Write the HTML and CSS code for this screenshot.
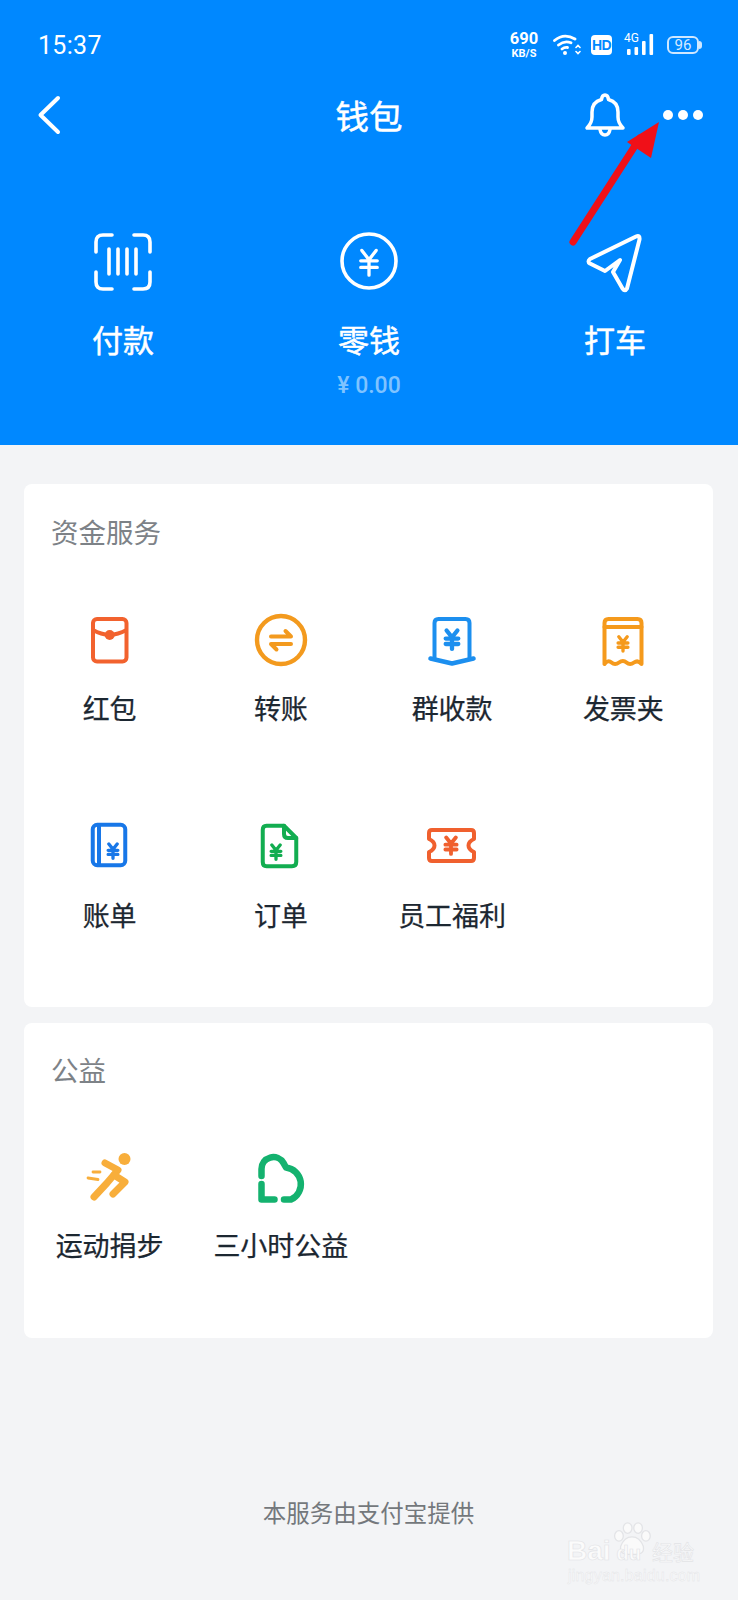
FILE: index.html
```html
<!DOCTYPE html>
<html>
<head>
	<meta charset="UTF-8">
	<title>钱包</title>
	<link rel="stylesheet" href="styles.css">
</head>
<body>

<!-- yen marks shared by the icons -->
<svg class="defs">
	<symbol id="yen" viewBox="0 0 20 26">
		<path d="M3.500 2 10 10.500 16.500 2M2.500 11.500H17.500M2.500 17.500H17.500M10 10.500V24.500" fill="none" stroke="currentColor" stroke-width="3" stroke-linecap="round" stroke-linejoin="round"/>
	</symbol>
	<symbol id="yenBold" viewBox="0 0 20 26">
		<path d="M4 3 10 10.500 16 3M3 12H17M3 18H17M10 10.500V23.500" fill="none" stroke="currentColor" stroke-width="4.800" stroke-linecap="round" stroke-linejoin="round"/>
	</symbol>
</svg>

<div id="wrapper">

	<div class="top">
		<div class="statusBar">
			<span class="time">15:37</span>
			<div class="statusIcons">
				<div class="speed"><b>690</b><i>KB/S</i></div>
				<svg class="wifi" width="28" height="22" viewBox="0 0 28 22" fill="none" stroke="#fff" stroke-width="2.800" stroke-linecap="round">
					<path d="M1.500 6.500Q11-1.500 22 5M5.500 11Q11.500 6 18 8.800M9 15Q11.500 13 14.500 13.500"/>
					<circle cx="12" cy="19" r="2" fill="#fff" stroke="none"/>
					<path d="M23 13.500 25 11.500 27 13.500M23 17.500 25 19.500 27 17.500" stroke-width="1.600"/>
				</svg>
				<span class="hd">HD</span>
				<div class="signal">
					<span>4G</span>
					<svg width="30" height="22" viewBox="0 0 30 22" fill="#fff">
						<rect x="3" y="15" width="3.600" height="6" rx="1"/>
						<rect x="10.500" y="13" width="3.600" height="8" rx="1"/>
						<rect x="18" y="7" width="3.600" height="14" rx="1"/>
						<rect x="25.500" y="0" width="3.600" height="21" rx="1"/>
					</svg>
				</div>
				<div class="battery"><span>96</span></div>
			</div>
		</div>

		<div class="nav">
			<svg width="24" height="40" viewBox="0 0 24 40" fill="none" stroke="#fff" stroke-width="4" stroke-linecap="round" stroke-linejoin="round">
				<path d="M21 3 3.500 20 21 37"/>
			</svg>
			<h1 class="title">钱包</h1>
			<div class="navRight">
				<svg width="42" height="44" viewBox="0 0 42 44" fill="none" stroke="#fff" stroke-width="3.500" stroke-linecap="round" stroke-linejoin="round">
					<path d="M3 35H39Q34 30 34 24V19Q34 9 24.500 6.500Q24 2 21 2Q18 2 17.500 6.500Q8 9 8 19V24Q8 30 3 35Z"/>
					<path d="M16 36.500Q17 42 21 42Q25 42 26 36.500"/>
				</svg>
				<div class="dots"><span></span><span></span><span></span></div>
			</div>
		</div>

		<div class="actions">
			<div class="action">
				<svg width="64" height="64" viewBox="0 0 64 64" fill="none" stroke="#fff" stroke-width="3.600" stroke-linecap="round" stroke-linejoin="round">
					<path d="M5 22V12Q5 5 12 5H21M43 5H52Q59 5 59 12V22M59 42V52Q59 59 52 59H43M21 59H12Q5 59 5 52V42"/>
					<path d="M18 19V44M27 19V44M36 19V44M45 19V44"/>
				</svg>
				<div class="actionName">付款</div>
			</div>
			<div class="action">
				<svg class="yuan" width="64" height="64" viewBox="0 0 64 64" fill="none">
					<circle cx="32" cy="31" r="27" stroke="#fff" stroke-width="3.600"/>
					<use href="#yen" x="21" y="18" width="22" height="29"/>
				</svg>
				<div class="actionName">零钱</div>
				<div class="actionSub">¥ 0.00</div>
			</div>
			<div class="action">
				<svg width="64" height="64" viewBox="0 0 64 64" fill="none" stroke="#fff" stroke-width="4" stroke-linecap="round" stroke-linejoin="round">
					<path d="M53 6.500 7 29Q4 31.500 7 33.500L22 41 37 30 30 42 39.500 58.500Q42 62 44 58.500L56.500 9.500Q57 4.500 53 6.500Z"/>
				</svg>
				<div class="actionName">打车</div>
			</div>
		</div>
	</div>

	<div class="main">

		<div class="card">
			<div class="cardTitle">资金服务</div>
			<div class="grid">
				<div class="item">
					<svg width="60" height="60" viewBox="0 0 60 60" fill="none" stroke="#f2622e" stroke-width="4" stroke-linejoin="round">
						<rect x="13" y="9" width="33.500" height="42.500" rx="4"/>
						<path d="M13 20Q21 24.500 29.700 25Q38 24.500 46.500 20"/>
						<circle cx="29.700" cy="25" r="5" fill="#f2622e" stroke="none"/>
					</svg>
					<div class="itemName">红包</div>
				</div>
				<div class="item">
					<svg width="60" height="60" viewBox="0 0 60 60" fill="none" stroke="#f39a1e" stroke-width="4.400" stroke-linecap="round" stroke-linejoin="round">
						<circle cx="30" cy="30" r="24"/>
						<path d="M20 26.500H40L34.500 21M40 34H20L25.500 39.500" stroke-width="4"/>
					</svg>
					<div class="itemName">转账</div>
				</div>
				<div class="item">
					<svg class="blue" width="60" height="60" viewBox="0 0 60 60" fill="none" stroke="#1c8fef" stroke-width="4" stroke-linecap="round" stroke-linejoin="round">
						<path d="M12.500 48V13Q12.500 9 16.500 9H43.500Q47.500 9 47.500 13V48"/>
						<path d="M8.500 48.500 30 53.500 51.500 48.500" stroke-width="4.600"/>
						<use href="#yenBold" x="21" y="17" width="18" height="25" stroke="none"/>
					</svg>
					<div class="itemName">群收款</div>
				</div>
				<div class="item">
					<svg class="orange" width="60" height="60" viewBox="0 0 60 60" fill="none" stroke="#f59a1c" stroke-width="4" stroke-linecap="round" stroke-linejoin="round">
						<path d="M11.500 54V13Q11.500 9 15.500 9H44.500Q48.500 9 48.500 13V54Q45 49.500 41 52.500T33.500 52.500 26 52.500 18.500 52.500 11.500 54Z"/>
						<path d="M11.500 17H48.500"/>
						<use href="#yenBold" x="23" y="24.500" width="14" height="18.500" stroke="none"/>
					</svg>
					<div class="itemName">发票夹</div>
				</div>
				<div class="item">
					<svg class="deepBlue" width="60" height="60" viewBox="0 0 60 60" fill="none" stroke="#1877e8" stroke-width="4" stroke-linejoin="round">
						<rect x="12.750" y="7.750" width="32.500" height="40.500" rx="4.500"/>
						<path d="M19 8V48"/>
						<use href="#yenBold" x="26" y="25" width="14" height="18" stroke="none"/>
					</svg>
					<div class="itemName">账单</div>
				</div>
				<div class="item">
					<svg class="green" width="60" height="60" viewBox="0 0 60 60" fill="none" stroke="#12ad50" stroke-width="4" stroke-linecap="round" stroke-linejoin="round">
						<path d="M15.500 8.750H33L45.250 21V45Q45.250 49.250 41 49.250H15.500Q11.750 49.250 11.750 45V12.750Q11.750 8.750 15.500 8.750Z"/>
						<path d="M33 8.750V17Q33 21 37 21H45.250"/>
						<use href="#yenBold" x="18" y="26" width="14" height="18" stroke="none"/>
					</svg>
					<div class="itemName">订单</div>
				</div>
				<div class="item">
					<svg class="red" width="60" height="60" viewBox="0 0 60 60" fill="none" stroke="#f0602e" stroke-width="4" stroke-linejoin="round">
						<path d="M10 13H49Q52 13 52 16V22Q46.500 24.500 46.500 28.500T52 35V41Q52 44 49 44H10Q7 44 7 41V35Q12.500 32.500 12.500 28.500T7 22V16Q7 13 10 13Z"/>
						<use href="#yenBold" x="21" y="18" width="16" height="21" stroke="none"/>
					</svg>
					<div class="itemName">员工福利</div>
				</div>
			</div>
		</div>

		<div class="card second">
			<div class="cardTitle">公益</div>
			<div class="grid">
				<div class="item">
					<svg width="60" height="60" viewBox="0 -1 60 60" fill="none" stroke="#f8ae3b" stroke-width="7" stroke-linecap="round" stroke-linejoin="round">
						<circle cx="44.500" cy="11" r="6" fill="#f8ae3b" stroke="none"/>
						<path d="M25 15 38 22 27 35 14 49"/>
						<path d="M34 27 45 34 33 46"/>
						<path d="M13 24H20M8 30 18 31.500" stroke-width="2.800"/>
					</svg>
					<div class="itemName">运动捐步</div>
				</div>
				<div class="item">
					<svg width="60" height="60" viewBox="0 -1 60 60" fill="none" stroke="#14b26f" stroke-width="6.500" stroke-linecap="round" stroke-linejoin="round">
						<path d="M10.500 28V21A11.800 11.800 0 0 1 32.500 15L35 19.500A16.800 16.800 0 0 1 40 51.500H33"/>
						<path d="M10.500 36V51.500H23.500"/>
					</svg>
					<div class="itemName">三小时公益</div>
				</div>
			</div>
		</div>

		<div class="footer">本服务由支付宝提供</div>
	</div>

	<!-- red arrow drawn on top of the header -->
	<svg class="arrow" width="738" height="260" viewBox="0 0 738 260">
		<path d="M573 242 640 138" fill="none" stroke="#f01018" stroke-width="7" stroke-linecap="round"/>
		<path d="M659 122 627 142 651 158Z" fill="#f01018"/>
	</svg>

	<div class="mark">
		<svg class="paw" width="40" height="44" viewBox="0 0 46 46" fill="#fafafa" stroke="#e3e4e7" stroke-width="1.500">
			<ellipse cx="8" cy="16" rx="5" ry="6"/>
			<ellipse cx="18" cy="7" rx="5" ry="6"/>
			<ellipse cx="30" cy="7" rx="5" ry="6"/>
			<ellipse cx="39" cy="16" rx="5" ry="6"/>
			<path d="M23 17Q32 17 36 28Q38 39 23 37Q8 39 10 28Q14 17 23 17Z"/>
		</svg>
		<div class="markBrand"><span>Bai</span><span class="markDu">du</span><span class="markCn">经验</span></div>
		<div class="markUrl">jingyan.baidu.com</div>
	</div>

</div>
</body>

</html>
```

FILE: styles.css
```css
*{
	box-sizing: border-box;
}

html, body{
	margin: 0;
	padding: 0;
}

body{
	font-family: "Noto Sans CJK SC", "Noto Sans", sans-serif;
	background: #f3f4f6;
}

.defs{
	position: absolute;
	width: 0;
	height: 0;
}

#wrapper{
	position: relative;
	width: 738px;
	height: 1600px;
	overflow: hidden;
}

/* blue header */
.top{
	height: 445px;
	background: #0088ff;
	color: #fff;
}

.statusBar{
	height: 90px;
	padding: 0 37px 0 38px;
	display: flex;
	align-items: center;
	justify-content: space-between;
}
.time{
	font-family: Roboto, sans-serif;
	font-size: 25px;
	letter-spacing: 0.3px;
}
.statusIcons{
	display: flex;
	align-items: center;
}
.speed{
	width: 30px;
	margin-right: 14px;
	display: flex;
	flex-direction: column;
	align-items: center;
	font-family: Roboto, sans-serif;
	line-height: 1;
}
.speed b{
	font-size: 16.500px;
	font-weight: 700;
}
.speed i{
	font-size: 11px;
	font-weight: 700;
	font-style: normal;
}
.wifi{
	margin-right: 10px;
}
.hd{
	width: 21px;
	height: 20px;
	margin-right: 12px;
	border-radius: 4px;
	background: #fff;
	color: #0088ff;
	font-family: "Liberation Sans", sans-serif;
	font-size: 14px;
	font-weight: 700;
	line-height: 20px;
	text-align: center;
	letter-spacing: -0.5px;
}
.signal{
	position: relative;
	width: 30px;
	height: 22px;
	margin-right: 13px;
}
.signal span{
	position: absolute;
	left: 0;
	top: -2px;
	font-family: Roboto, sans-serif;
	font-size: 12px;
	line-height: 12px;
}
.signal svg{
	display: block;
}
.battery{
	position: relative;
	width: 32px;
	height: 18px;
	margin-right: 2px;
	border: 2px solid #cfe7ff;
	border-radius: 6px;
	font-family: Roboto, sans-serif;
	font-size: 15px;
	line-height: 14px;
	text-align: center;
	color: #d6eaff;
}
.battery:after{
	content: "";
	position: absolute;
	right: -5px;
	top: 3px;
	width: 3px;
	height: 8px;
	border-radius: 0 3px 3px 0;
	background: #cfe7ff;
}

.nav{
	height: 50px;
	padding: 0 37px;
	display: grid;
	grid-template-columns: 1fr auto 1fr;
	align-items: center;
}
.title{
	margin: 0;
	font-size: 33.500px;
	font-weight: 400;
	line-height: 48px;
	-webkit-text-stroke: 0.5px #fff;
}
.navRight{
	display: flex;
	align-items: center;
	justify-content: flex-end;
}
.dots{
	display: flex;
	gap: 5px;
	margin-left: 37px;
	margin-right: -2px;
}
.dots span{
	width: 10px;
	height: 10px;
	border-radius: 50%;
	background: #fff;
}

.actions{
	padding-top: 90px;
	display: grid;
	grid-template-columns: repeat(3, 1fr);
}
.action{
	display: flex;
	flex-direction: column;
	align-items: center;
}
.yuan{
	color: #fff;
}
.actionName{
	margin-top: 25px;
	font-size: 31px;
	font-weight: 400;
	line-height: 40px;
	-webkit-text-stroke: 0.5px #fff;
}
.actionSub{
	margin-top: 12px;
	font-family: Roboto, "Noto Sans CJK SC", sans-serif;
	font-size: 23px;
	font-weight: 500;
	line-height: 30px;
	color: #7fc3ff;
}

/* white cards */
.main{
	padding: 39px 25px 0 24px;
}
.card{
	padding: 29px 4px 74px 0;
	margin-bottom: 16px;
	background: #fff;
	border-radius: 8px;
}
.second{
	padding-top: 28px;
	padding-bottom: 75px;
}
.cardTitle{
	padding-left: 27px;
	font-size: 27.500px;
	line-height: 36px;
	color: #7d8287;
}
.grid{
	margin-top: 61px;
	display: grid;
	grid-template-columns: repeat(4, 1fr);
	row-gap: 91px;
}
.second .grid{
	margin-top: 60px;
}
.item{
	display: flex;
	flex-direction: column;
	align-items: center;
}
.itemName{
	margin-top: 20px;
	font-size: 27px;
	line-height: 36px;
	color: #1c2731;
	white-space: nowrap;
	-webkit-text-stroke: 0.25px #1c2731;
}
.blue{ color: #1c8fef; }
.orange{ color: #f59a1c; }
.deepBlue{ color: #1877e8; }
.green{ color: #12ad50; }
.red{ color: #f0602e; }

.footer{
	margin-top: 156px;
	font-size: 23.500px;
	line-height: 36px;
	text-align: center;
	color: #74787c;
}

.arrow{
	position: absolute;
	left: 0;
	top: 0;
}

/* faint watermark in the corner */
.mark{
	position: absolute;
	left: 567px;
	top: 1518px;
	width: 134px;
	height: 68px;
	color: #fbfbfb;
}
.paw{
	position: absolute;
	left: 45px;
	top: 2px;
}
.markBrand{
	position: absolute;
	left: 0;
	top: 16px;
	display: flex;
	align-items: baseline;
	font-family: "Liberation Sans", "Noto Sans CJK SC", sans-serif;
	font-size: 28px;
	font-weight: 700;
	line-height: 34px;
	white-space: nowrap;
	-webkit-text-stroke: 0.6px #e2e3e6;
}
.markDu{
	margin-left: 6px;
	font-size: 20px;
}
.markCn{
	margin-left: 11px;
	font-size: 21px;
	font-weight: 400;
}
.markUrl{
	position: absolute;
	left: 1px;
	top: 49px;
	font-family: "Liberation Sans", sans-serif;
	font-size: 16px;
	line-height: 18px;
	white-space: nowrap;
	letter-spacing: 0.2px;
	-webkit-text-stroke: 0.4px #e2e3e6;
}
```
